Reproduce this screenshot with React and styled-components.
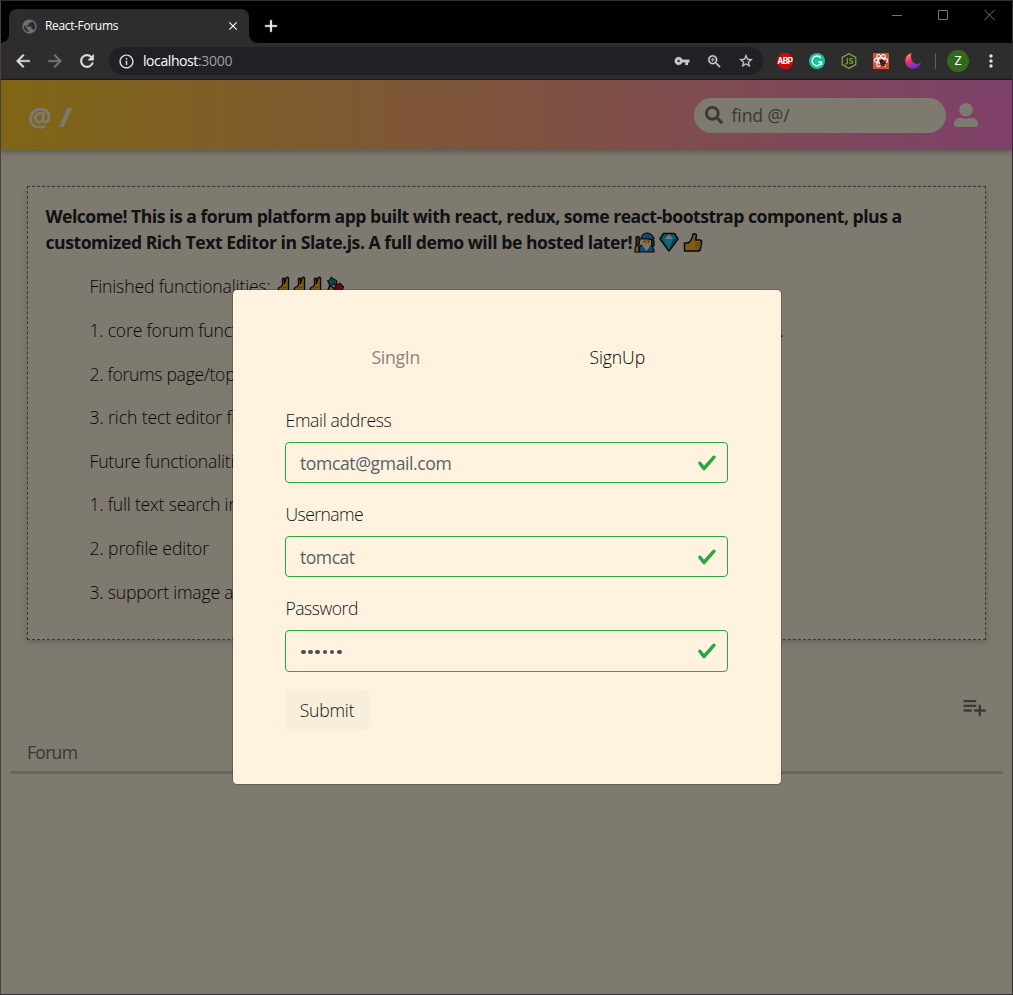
import React from 'react';
import styled, { createGlobalStyle } from 'styled-components';
import { MdArrowBack, MdArrowForward, MdRefresh, MdVpnKey, MdZoomIn, MdStarBorder, MdMoreVert, MdPublic, MdInfoOutline, MdPlaylistAdd, MdClose, MdAdd } from 'react-icons/md';
import { FaSearch, FaUserAlt } from 'react-icons/fa';

const Global = createGlobalStyle`
  * { box-sizing: border-box; }
  body { margin: 0; background: #000; font-family: 'Open Sans', 'Noto Sans', sans-serif; }
  p, h1 { margin: 0; }
  svg { display: block; flex: none; }
`;

const Window = styled.div`
  width: 1013px; height: 995px; display: flex; flex-direction: column;
  border: 1px solid #333130; border-left-color: #4b403a; background: #000; overflow: hidden;
`;
const TabStrip = styled.div`
  height: 42px; flex: none; display: flex; align-items: flex-end; padding-left: 8px; background: #000;
`;
const Tab = styled.div`
  width: 240px; height: 34px; position: relative; display: flex; align-items: center;
  background: #2d2d2d; border-radius: 8px 8px 0 0; padding: 0 9px 0 12px; color: #fff;
  &::before, &::after {
    content: ''; position: absolute; bottom: 0; width: 8px; height: 8px;
  }
  &::before { left: -8px; background: radial-gradient(circle at 0 0, transparent 7.5px, #2d2d2d 8px); }
  &::after { right: -8px; background: radial-gradient(circle at 100% 0, transparent 7.5px, #2d2d2d 8px); }
`;
const TabTitle = styled.span`
  font-size: 12px; line-height: 16px; margin-left: 7px; flex: 1; letter-spacing: -0.35px;
`;
const NewTab = styled.div`
  color: #fff; margin: 0 0 7px 12px;
  path:not([fill='none']) { stroke: currentColor; stroke-width: 0.4px; }
`;
const WindowButtons = styled.div`
  margin-left: auto; align-self: flex-start; display: flex; gap: 35px; padding: 8px 17px 0 0;
`;
const Toolbar = styled.div`
  height: 37px; flex: none; display: flex; align-items: center; background: #2d2d2d;
  border-bottom: 1px solid #1c1c1c; padding: 0 11px 0 12px; color: #dfe1e5;
`;
const NavButtons = styled.div`
  display: flex; align-items: center; gap: 12px; width: 96px; flex: none;
  path:not([fill='none']) { stroke: currentColor; stroke-width: 0.5px; }
`;
const AddressBar = styled.div`
  width: 654px; flex: none; height: 28px; border-radius: 14px; background: #202124; display: flex; align-items: center;
  padding: 0 9px; margin: 0 14px 0 0;
`;
const Url = styled.span`
  flex: 1; margin-left: 8px; font-size: 14px; line-height: 18px; padding-bottom: 1px; color: #fff; letter-spacing: -0.42px;
  span { color: #9aa0a6; letter-spacing: -0.25px; }
`;
const AddressIcons = styled.div`
  display: flex; align-items: center; gap: 15.5px; color: #c8cacd;
  path:not([fill='none']) { stroke: currentColor; stroke-width: 0.4px; }
`;
const Extensions = styled.div`
  display: flex; gap: 16px; align-items: center; flex: none;
`;
const Divider = styled.div`
  width: 1px; flex: none; height: 16px; background: #5f6063; margin: 0 11px 0 14px;
`;
const Avatar = styled.div`
  width: 22px; height: 22px; flex: none; border-radius: 50%; background: #33691e; color: #fff;
  font: 12px/22px Roboto, sans-serif; text-align: center; margin-right: 12px;
`;
const Viewport = styled.div`
  flex: 1; position: relative; background: #fef4df; font-size: 17.6px; line-height: 26px; color: #212529; font-weight: 350;
`;
const Header = styled.header`
  height: 70px; display: flex; align-items: center; justify-content: space-between;
  padding: 0 34px 0 27px; background: linear-gradient(to right, #ffcc2a, #ff80d5);
  box-shadow: 0 2px 6px rgba(0, 0, 0, 0.3);
`;
const Brand = styled.span`
  display: flex; align-items: center; gap: 8px; font-size: 26.5px; font-weight: 700; color: #fef4df; padding-top: 3px;
`;
const Slash = styled.span`
  transform: scaleX(1.25);
`;
const HeaderRight = styled.div`
  display: flex; align-items: center; gap: 8px; color: #fef4df;
`;
const SearchBox = styled.div`
  width: 252px; height: 35px; border-radius: 18px; background: #fef4df; color: #777067;
  display: flex; align-items: center; gap: 8.5px; padding-left: 11px; font-weight: 400; letter-spacing: -0.1px;
`;
const Card = styled.section`
  margin: 36px 26px 0; height: 454px; border: 1px dashed #777067; padding: 16px 17px;
  box-shadow: 0 2px 6px rgba(0, 0, 0, 0.2);
`;
const Title = styled.h1`
  font-size: 17.6px; line-height: 26px; font-weight: 700; padding-left: 0.5px;
`;
const TitleLine = styled.span`
  display: flex; align-items: center; white-space: nowrap; letter-spacing: ${(p) => p.$ls}px;
`;
const EmojiRow = styled.span`
  display: flex; gap: ${(p) => p.$gap}px; margin-left: ${(p) => p.$left}px;
`;
const List = styled.div`
  padding: 18.4px 0 0 44.5px; display: flex; flex-direction: column; gap: 17.6px; color: #0c0e10;
`;
const Line = styled.p`
  display: flex; align-items: center; justify-content: ${(p) => (p.$width ? 'space-between' : 'flex-start')};
  width: ${(p) => (p.$width ? `${p.$width}px` : 'auto')};
  white-space: nowrap; letter-spacing: ${(p) => p.$ls ?? -0.2}px;
`;
const Actions = styled.div`
  display: flex; justify-content: flex-end; padding: 53px 24px 0 0; color: #777067;
`;
const ForumHead = styled.div`
  margin: 18px 9px 0; padding: 0 17px; height: 35px; border-bottom: 3px solid #d6cbb7; color: #777067;
  font-weight: 400; letter-spacing: -0.75px;
`;
const Overlay = styled.div`
  position: absolute; inset: 0; background: rgba(0, 0, 0, 0.5);
  display: flex; justify-content: center; align-items: flex-start; padding-top: 209px;
`;
const Modal = styled.div`
  width: 550px; height: 496px; background: #fff3e0; background-clip: padding-box; border: 1px solid rgba(0, 0, 0, 0.2);
  border-radius: 5px; padding: 54px 53px 0 52px; margin-left: 1px; color: #121416;
`;
const ModalTabs = styled.div`
  display: flex; margin-bottom: 37px;
`;
const ModalTab = styled.div`
  flex: 1; text-align: center; letter-spacing: ${(p) => p.$ls}px; color: ${(p) => (p.$active ? '#000' : '#8a847b')};
  font-weight: ${(p) => (p.$active ? 350 : 400)};
`;
const Field = styled.div`
  margin-bottom: ${(p) => (p.$last ? 17 : 18)}px;
`;
const Label = styled.div`
  height: 35px; letter-spacing: ${(p) => p.$ls}px; padding-left: 0.5px;
`;
const Input = styled.div`
  height: ${(p) => (p.$tall ? 42 : 41)}px; border: 1px solid #28a745; border-radius: 4px; color: #5a6066; letter-spacing: ${(p) => p.$ls}px;
  display: flex; align-items: center; justify-content: space-between; padding: 0 10px 0 14px; font-weight: 400;
`;
const Dots = styled.span`
  display: flex; gap: 2.6px; padding: 2px 0 0 1px;
  i { width: 4.6px; height: 4.6px; border-radius: 50%; background: #495057; }
`;
const Submit = styled.div`
  width: 84px; height: 42px; border-radius: 4px; background: #f8eedc; text-align: center; line-height: 42px; letter-spacing: -0.2px;
`;

const Check = () => (
  <svg width="20" height="20" viewBox="0 0 8 8">
    <path fill="#28a745" d="M2.3 6.73.6 4.53c-.4-1.04.46-1.4 1.1-.8l1.1 1.4 3.4-3.8c.6-.63 1.6-.27 1.2.7l-4 4.6c-.43.5-.8.4-1.1.1z" />
  </svg>
);
const Mage = () => (
  <svg width="21" height="21" viewBox="0 0 21 21" stroke="#111" strokeWidth="1.200" strokeLinejoin="round">
    <path d="M17 7l3 2v5h-3z" fill="#1468a8" />
    <path d="M5 20v-4q1-3 4-3h7q4 2 4 7z" fill="#2a8fe0" />
    <path d="M2 5q3-2 4 2l-1 6-3 1z" fill="#8a5236" />
    <path d="M1 20v-4l1.500-2.500L5 14v6z" fill="#ffb82e" />
    <path d="M8 7.500h9V13l-4.500 6L8 13z" fill="#f3eee6" stroke="none" />
    <path d="M9 7h7v4.500H9z" fill="#ffc63b" stroke="none" />
    <path d="M10 9.500h1M14 9.500h1" strokeWidth="1" />
    <path d="M7 7Q8 1 13 1q5 .5 7 5.500-1.500 1.500-3.500.8Q12 6 7 7z" fill="#2a8fe0" />
  </svg>
);
const Gem = () => (
  <svg width="20" height="20" viewBox="0 0 20 20" strokeLinejoin="round">
    <path d="M4.500 1.500h11L19 7l-9 12L1 7z" fill="#17b4dc" stroke="#111" strokeWidth="1.5" />
    <path d="M6 7l4-5 4 5z" fill="#e8f6fb" />
    <path d="M6 7h8l-4 11z" fill="#35cde9" />
    <path d="M14 7h4l-8 11z" fill="#1278b8" />
  </svg>
);
const Thumb = () => (
  <svg width="20" height="20" viewBox="0 0 20 20" strokeLinejoin="round">
    <path d="M1.500 11H5q4-2 5-9 3-1 3.500 1.500L12.500 8H17q2 .5 1.500 3l-1 6q-.5 2-3 2h-13z" fill="#ffb82e" stroke="#111" strokeWidth="1.5" />
    <path d="M12 11h6M12 13.500h6M12 16h5" stroke="#b87912" />
  </svg>
);
const Victory = () => (
  <svg width="14" height="20" viewBox="0 0 14 20" strokeLinejoin="round">
    <path d="M1.500 19v-7l4-2.500V3q1-1.500 2 0v4.500L9 2q1.500-1.500 2.500 0V19z" fill="#ffb82e" stroke="#111" strokeWidth="1.400" />
    <path d="M5 12l5-1" stroke="#a86b10" />
  </svg>
);
const Popper = () => (
  <svg width="20" height="20" viewBox="0 0 20 20" strokeLinejoin="round" stroke="#111">
    <path d="M1 19L5 9l8 7z" fill="#ffb82e" strokeWidth="1.400" />
    <path d="M2.500 4.500L5 4l1-3 3 2 3 2-1 4-4-.5-2 2z" fill="#16879c" />
    <path d="M11 9l4-2 4 4-2 3-4 2-4-3z" fill="#b81f1f" />
  </svg>
);
const Abp = () => (
  <svg width="16" height="16" viewBox="0 0 16 16">
    <path d="M4.700 0h6.600L16 4.700v6.600L11.300 16H4.700L0 11.300V4.700z" fill="#c70d0c" />
    <text x="8" y="11" fontSize="8.500" fontWeight="700" fontFamily="Roboto" fill="#fff" textAnchor="middle" letterSpacing="-0.500">ABP</text>
  </svg>
);
const Grammarly = () => (
  <svg width="16" height="16" viewBox="0 0 16 16">
    <circle cx="8" cy="8" r="8" fill="#15c39a" />
    <path d="M11.800 5A4.800 4.800 0 1 0 12.600 9H9.300M12.500 8.800v3.200" fill="none" stroke="#fff" strokeWidth="1.400" />
  </svg>
);
const NodeJs = () => (
  <svg width="16" height="16" viewBox="0 0 16 16" fill="none" stroke="#7fb03a" strokeWidth="1.100">
    <path d="M8 .7l6.800 3.700v7.200L8 15.300l-6.800-3.700V4.400z" />
    <path d="M6.300 5v5q0 1.200-2 1M11.700 5.800q-3-1-3 .7 0 1 1.500 1.200t1.700 1.300q0 1.800-3.500.9" />
  </svg>
);
const ReactExt = () => (
  <svg width="16" height="16" viewBox="0 0 16 16">
    <path fill="#dd4b39" d="M0 0h16v16H0z" />
    <g fill="none" stroke="#fff" strokeWidth="1.100">
      <ellipse cx="8" cy="7.500" rx="6.700" ry="2.600" />
      <ellipse cx="8" cy="7.500" rx="6.700" ry="2.600" transform="rotate(60 8 7.500)" />
      <ellipse cx="8" cy="7.500" rx="6.700" ry="2.600" transform="rotate(120 8 7.500)" />
    </g>
    <path d="M6.500 8l2-1.500 3 1 1.500 2-1 3-2 1.500-2.500-1.500z" fill="#20130f" />
    <path d="M7 11l5-3M8 13l4-2" stroke="#dd4b39" strokeWidth=".6" />
  </svg>
);
const Moon = () => (
  <svg width="16" height="16" viewBox="0 0 16 16">
    <defs>
      <linearGradient id="moon" x1="0" y1="0" x2="0.400" y2="1">
        <stop offset="0.100" stopColor="#ff9838" /><stop offset="0.500" stopColor="#f0307c" /><stop offset="1" stopColor="#6a2fc4" />
      </linearGradient>
    </defs>
    <path d="M6.500 0A8 8 0 1 0 16 9.500Q11 12.500 8 9T6.500 0z" fill="url(#moon)" />
  </svg>
);

const FIELDS = [
  { label: 'Email address', ls: -0.33, value: 'tomcat@gmail.com', vls: -0.4 },
  { label: 'Username', ls: -0.6, value: 'tomcat', vls: -0.5 },
  { label: 'Password', ls: -0.5, dots: 6 },
];

export default function App() {
  return (
    <Window>
      <Global />
      <TabStrip>
        <Tab>
          <MdPublic size={17} color="#6b7075" />
          <TabTitle>React-Forums</TabTitle>
          <MdClose size={14} />
        </Tab>
        <NewTab><MdAdd size={20} /></NewTab>
        <WindowButtons>
          <svg width="11" height="11" stroke="#777"><path d="M0 6.500h10" /></svg>
          <svg width="11" height="11" stroke="#777" fill="none"><path d="M.5 1.500h9v9h-9z" /></svg>
          <svg width="11" height="11" stroke="#777"><path d="M.5 1l10 10M10.500 1l-10 10" /></svg>
        </WindowButtons>
      </TabStrip>
      <Toolbar>
        <NavButtons>
          <MdArrowBack size={20} />
          <MdArrowForward size={20} color="#77787a" />
          <MdRefresh size={20} />
        </NavButtons>
        <AddressBar>
          <MdInfoOutline size={17} />
          <Url>localhost<span>:3000</span></Url>
          <AddressIcons>
            <MdVpnKey size={16} />
            <MdZoomIn size={17} />
            <MdStarBorder size={16} />
          </AddressIcons>
        </AddressBar>
        <Extensions>
          <Abp /><Grammarly /><NodeJs /><ReactExt /><Moon />
        </Extensions>
        <Divider />
        <Avatar>Z</Avatar>
        <MdMoreVert size={20} />
      </Toolbar>
      <Viewport>
        <Header>
          <Brand><span>@</span><Slash>/</Slash></Brand>
          <HeaderRight>
            <SearchBox><FaSearch size={18} />find @/</SearchBox>
            <FaUserAlt size={24} />
          </HeaderRight>
        </Header>
        <Card>
          <Title>
            <TitleLine $ls={-0.49}>Welcome! This is a forum platform app built with react, redux, some react-bootstrap component, plus a</TitleLine>
            <TitleLine $ls={-0.455}>
              customized Rich Text Editor in Slate.js. A full demo will be hosted later!
              <EmojiRow $gap={4} $left={2}><Mage /><Gem /><Thumb /></EmojiRow>
            </TitleLine>
          </Title>
          <List>
            <Line $ls={-0.14}>Finished functionalities:<EmojiRow $gap={2} $left={6}><Victory /><Victory /><Victory /><Popper /></EmojiRow></Line>
            <Line $ls={-0.2} $width={694}><span>1. core forum functionalities: create forum, topic, post, reply, edit, delete and vote</span><span>.</span></Line>
            <Line $ls={-0.3}>2. forums page/topics page</Line>
            <Line $ls={-0.1}>3. rich tect editor for posts</Line>
            <Line>Future functionalities:</Line>
            <Line>1. full text search in forums</Line>
            <Line $ls={-0.1}>2. profile editor</Line>
            <Line>3. support image and video</Line>
          </List>
        </Card>
        <Actions><MdPlaylistAdd size={28} /></Actions>
        <ForumHead>Forum</ForumHead>
        <Overlay>
          <Modal>
            <ModalTabs>
              <ModalTab $ls={-0.25}>SingIn</ModalTab>
              <ModalTab $active $ls={-0.1}>SignUp</ModalTab>
            </ModalTabs>
            {FIELDS.map((f) => (
              <Field key={f.label} $last={!!f.dots}>
                <Label $ls={f.ls}>{f.label}</Label>
                <Input $ls={f.vls || 0} $tall={!!f.dots}>
                  {f.dots ? <Dots>{Array.from({ length: f.dots }, (_, i) => <i key={i} />)}</Dots> : <span>{f.value}</span>}
                  <Check />
                </Input>
              </Field>
            ))}
            <Submit>Submit</Submit>
          </Modal>
        </Overlay>
      </Viewport>
    </Window>
  );
}
